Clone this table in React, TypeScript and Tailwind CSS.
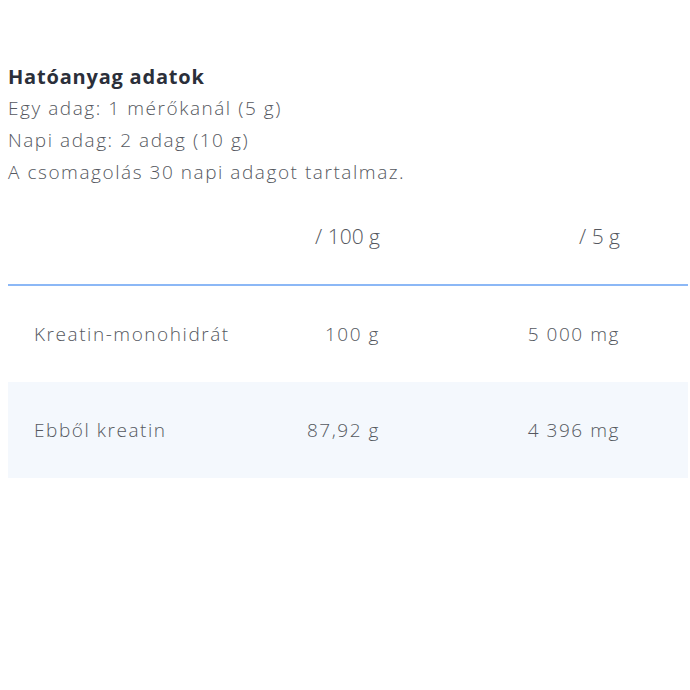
import React from "react";

const rows = [
  { name: "Kreatin-monohidrát", per100: "100 g", perServing: "5 000 mg", shaded: false },
  { name: "Ebből kreatin", per100: "87,92 g", perServing: "4 396 mg", shaded: true },
];

const App = () => {
  return (
    <div className="w-[690px] h-[690px] bg-white pt-[63px] px-2 font-['Open_Sans',sans-serif]">
      <h3 className="text-[20px] leading-[28px] font-bold text-[#2b2f3a] tracking-[0.8px]">Hatóanyag adatok</h3>
      <div className="mt-[1px] text-[19px] leading-[32px] text-[#555860] font-light tracking-[1.55px]">
        <p>Egy adag: 1 mérőkanál (5 g)</p>
        <p>Napi adag: 2 adag (10 g)</p>
        <p>A csomagolás 30 napi adagot tartalmaz.</p>
      </div>

      <div className="mt-[2px] w-[680px]">
        <div className="flex h-[96px] items-center border-b-2 border-[#8cb8f6] text-[21px] text-[#555860] font-light">
          <div className="w-[250px]" />
          <div className="w-[122px] text-right">/ 100 g</div>
          <div className="w-[240px] text-right">/ 5 g</div>
        </div>
        {rows.map((row) => (
          <div
            key={row.name}
            className={
              "flex h-[96px] items-center text-[19px] text-[#555860] font-light tracking-[1.55px] " +
              (row.shaded ? "bg-[#f4f8fd]" : "bg-white")
            }
          >
            <div className="w-[250px] pl-[26px]">{row.name}</div>
            <div className="w-[122px] text-right">{row.per100}</div>
            <div className="w-[240px] text-right">{row.perServing}</div>
          </div>
        ))}
      </div>
    </div>
  );
};

export default App;
